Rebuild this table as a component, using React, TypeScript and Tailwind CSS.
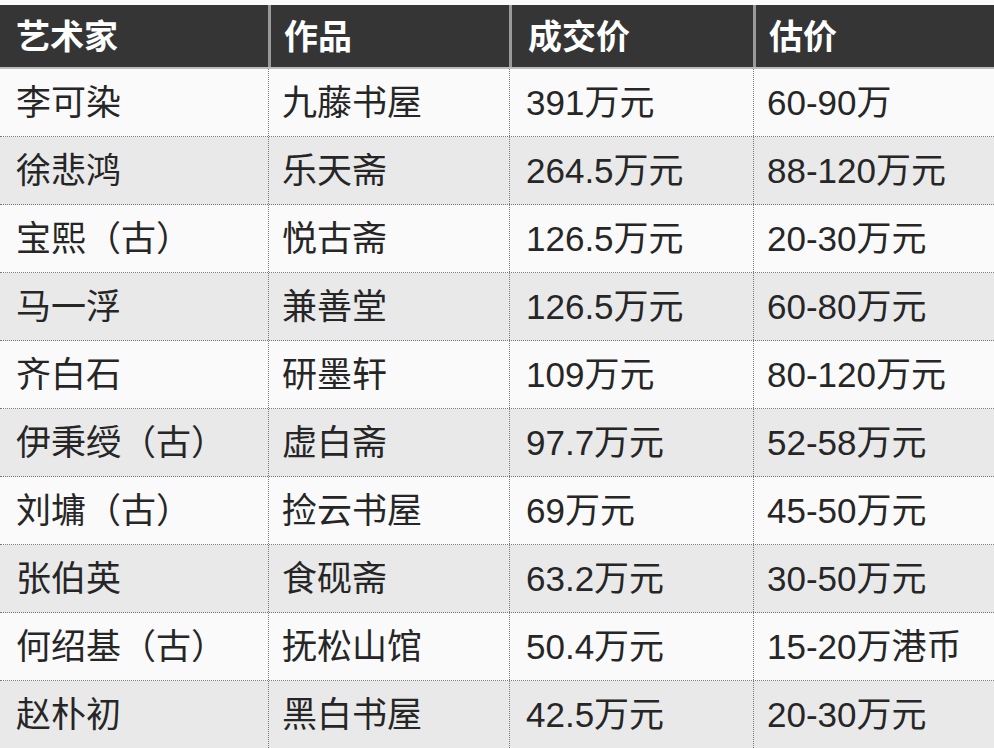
const rows: [string, string, string, string][] = [
  ['李可染', '九藤书屋', '391万元', '60-90万'],
  ['徐悲鸿', '乐天斋', '264.5万元', '88-120万元'],
  ['宝熙（古）', '悦古斋', '126.5万元', '20-30万元'],
  ['马一浮', '兼善堂', '126.5万元', '60-80万元'],
  ['齐白石', '研墨轩', '109万元', '80-120万元'],
  ['伊秉绶（古）', '虚白斋', '97.7万元', '52-58万元'],
  ['刘墉（古）', '捡云书屋', '69万元', '45-50万元'],
  ['张伯英', '食砚斋', '63.2万元', '30-50万元'],
  ['何绍基（古）', '抚松山馆', '50.4万元', '15-20万港币'],
  ['赵朴初', '黑白书屋', '42.5万元', '20-30万元'],
];

const headers = ['艺术家', '作品', '成交价', '估价'];
const cols = 'grid grid-cols-[268px_241px_244px_241px]';
const pads = ['pl-[16px]', 'pl-[13px]', 'pl-[16px]', 'pl-[13px]'];

export default function App() {
  return (
    <div
      className="w-[994px] h-[748px] overflow-hidden bg-[#fafafa] pt-[5px] text-[#262626]"
      style={{ fontFamily: '"Liberation Sans", "Noto Sans CJK SC", sans-serif' }}
    >
      <div className={`${cols} h-[64px] bg-[#353535] border-b-2 border-[#bdbdbd]`}>
        {headers.map((h, i) => (
          <div
            key={h}
            className={`flex items-center pt-[3px] ${pads[i]} text-[34px] font-bold text-white ${
              i > 0 ? 'border-l-[3px] border-[#9a9a9a]' : ''
            }`}
          >
            {h}
          </div>
        ))}
      </div>
      {rows.map((r, ri) => (
        <div
          key={r[0]}
          className={`${cols} h-[68px] border-b border-dotted border-[#7a7a7a] ${
            ri % 2 === 1 ? 'bg-[#e9e9e9]' : 'bg-[#fafafa]'
          }`}
        >
          {r.map((c, ci) => (
            <div
              key={ci}
              className={`flex items-center ${pads[ci]} text-[35px] leading-none ${
                ci > 0 ? 'border-l border-dotted border-[#7a7a7a]' : ''
              }`}
            >
              {c}
            </div>
          ))}
        </div>
      ))}
    </div>
  );
}
